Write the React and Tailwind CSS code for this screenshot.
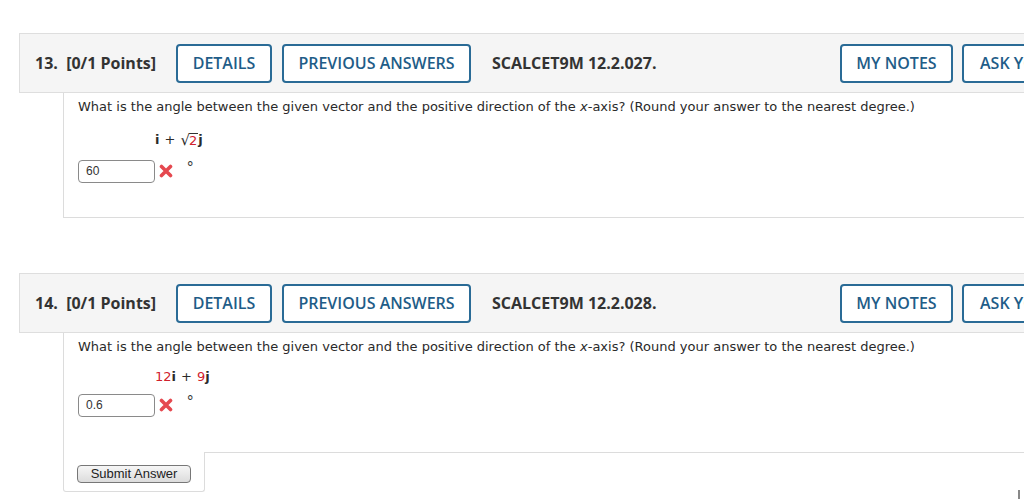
import React from "react";

function RedX() {
  return (
    <svg width="14" height="14" viewBox="0 0 14 14" className="block">
      <path d="M2.5 2.5 L11.5 11.5 M11.5 2.5 L2.5 11.5" stroke="#e5484f" strokeWidth="3.6" strokeLinecap="round" />
    </svg>
  );
}

function Btn({ w, children, left }) {
  return (
    <div
      className={`${w} h-[39px] shrink-0 flex items-center ${left ? "justify-start pl-[16px]" : "justify-center"} border-2 border-[#2a6b96] rounded-[4px] bg-white text-[#1f5d88] text-[16px] font-semibold whitespace-nowrap`}
      style={{ fontFamily: '"Open Sans", sans-serif' }}
    >
      {children}
    </div>
  );
}

function Header({ num, code }) {
  return (
    <div className="ml-[19px] w-[1200px] h-[60px] bg-[#f5f5f5] border border-[#dedede] flex items-center pl-[15px] text-[#333]" style={{ fontFamily: '"Open Sans", sans-serif' }}>
      <span className="text-[16px] font-bold w-[122px] shrink-0 whitespace-nowrap">{num}&nbsp; [0/1 Points]</span>
      <div className="w-[19px] shrink-0" />
      <Btn w="w-[96px]">DETAILS</Btn>
      <div className="w-[10px] shrink-0" />
      <Btn w="w-[189px]">PREVIOUS ANSWERS</Btn>
      <span className="ml-[21px] w-[348px] shrink-0 text-[16px] font-bold whitespace-nowrap">{code}</span>
      <Btn w="w-[113px]">MY NOTES</Btn>
      <div className="w-[9px] shrink-0" />
      <Btn w="w-[200px]" left>ASK YOUR TEACHER</Btn>
    </div>
  );
}

const verd = { fontFamily: '"DejaVu Sans", Verdana, sans-serif' };
const arial = { fontFamily: '"Liberation Sans", Arial, sans-serif' };

function Question({ math, value, tight }) {
  return (
    <div className="pl-[14px] text-[#2a2a2a]" style={verd}>
      <div className="pt-[6px] text-[13px] leading-[16px] whitespace-nowrap">
        What is the angle between the given vector and the positive direction of the <i>x</i>-axis? (Round your answer to the nearest degree.)
      </div>
      <div className={`${tight ? "mt-[14px]" : "mt-[17px]"} pl-[77px] h-[16px] text-[13px] leading-[16px] flex items-center`}>{math}</div>
      <div className={`${tight ? "mt-[9px]" : "mt-[12px]"} flex items-center h-[22px]`}>
        <div className="w-[77px] h-[23px] border border-[#8a8a8a] rounded-[4px] bg-white flex items-center pl-[7px] text-[12px] text-[#333]" style={arial}>
          {value}
        </div>
        <div className="ml-[4px]"><RedX /></div>
        <div className="ml-[14px] -mt-[7px] text-[16px] leading-[16px] text-[#333]" style={arial}>°</div>
      </div>
    </div>
  );
}

export default function App() {
  const math1 = (
    <span className="flex items-center">
      <b>i</b>
      <span className="mx-[5px]">+</span>
      <span className="text-[15px] leading-[16px] mr-[-1px]">√</span>
      <span className="border-t border-[#333] leading-[14px] text-[#d0212c] pr-[1px]">2</span>
      <b>j</b>
    </span>
  );
  const math2 = (
    <span className="flex items-center">
      <span className="text-[#d0212c]">12</span>
      <b>i</b>
      <span className="mx-[5px]">+</span>
      <span className="text-[#d0212c]">9</span>
      <b>j</b>
    </span>
  );
  return (
    <div className="w-[1024px] h-[499px] overflow-hidden bg-white relative">
      <div className="h-[33px]" />
      <Header num="13." code="SCALCET9M 12.2.027." />
      <div className="ml-[63px] w-[1100px] h-[125px] border-l border-b border-[#dcdcdc]">
        <Question math={math1} value="60" />
      </div>
      <div className="h-[55px]" />
      <Header num="14." code="SCALCET9M 12.2.028." />
      <div className="ml-[63px] w-[1100px] h-[120px] border-l border-b border-[#dcdcdc]">
        <Question math={math2} value="0.6" tight />
      </div>
      <div className="ml-[63px] w-[142px] h-[40px] -mt-[1px] border-l border-r border-b border-[#dcdcdc] rounded-bl-[3px] rounded-br-[3px] bg-white relative pl-[13px] pt-[13px]">
        <div className="w-[114px] h-[18px] border border-[#777] rounded-[4px] bg-gradient-to-b from-[#f6f6f6] to-[#dcdcdc] flex items-center justify-center text-[13px] text-[#222]" style={arial}>
          Submit Answer
        </div>
      </div>
      <div className="absolute left-[1018px] top-[490px] w-[2px] h-[9px] bg-[#888]" />
    </div>
  );
}
